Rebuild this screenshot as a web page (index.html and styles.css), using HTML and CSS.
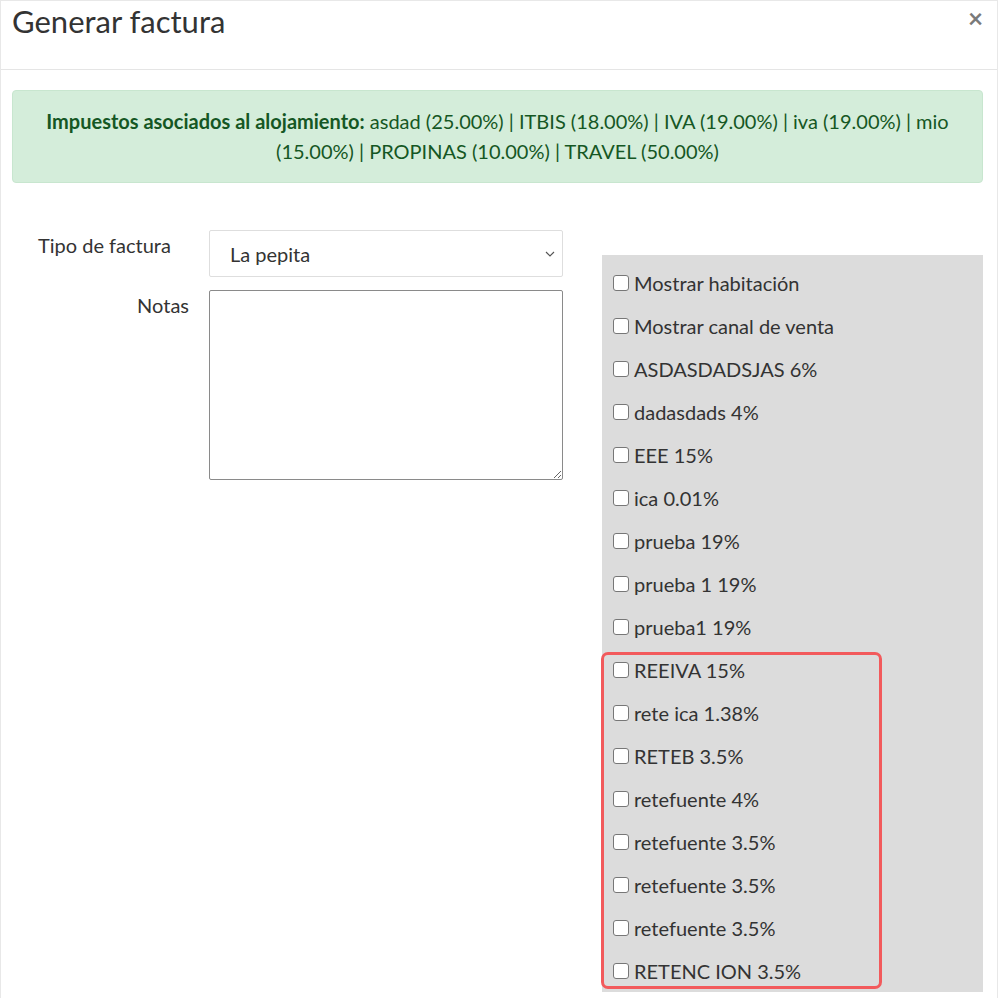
FILE: index.html
```html
<!DOCTYPE html>
<html lang="es">
<head>
<meta charset="utf-8">
<title>Generar factura</title>
<link rel="stylesheet" href="styles.css">
</head>
<body>
<div class="modal">
	<header class="modal-header">
		<h1>Generar factura</h1>
		<span class="close">&times;</span>
	</header>
	<div class="modal-body">
		<p class="alert"><b>Impuestos asociados al alojamiento:</b> asdad (25.00%) | ITBIS (18.00%) | IVA (19.00%) | iva (19.00%) | mio (15.00%) | PROPINAS (10.00%) | TRAVEL (50.00%)</p>
		<div class="content">
			<form class="fields">
				<label class="lbl lbl-left" for="tipo">Tipo de factura</label>
				<div class="select-wrap">
					<select id="tipo" class="ctl">
						<option>La pepita</option>
					</select>
					<svg class="chevron" width="10" height="6" viewBox="0 0 10 6"><path d="M1 1l4 4 4-4" fill="none" stroke="#555" stroke-width="1.1"/></svg>
				</div>
				<label class="lbl" for="notas">Notas</label>
				<textarea id="notas" class="ctl notes"></textarea>
			</form>
			<div class="options">
				<label class="opt"><input type="checkbox"> Mostrar habitación</label>
				<label class="opt"><input type="checkbox"> Mostrar canal de venta</label>
				<label class="opt"><input type="checkbox"> ASDASDADSJAS 6%</label>
				<label class="opt"><input type="checkbox"> dadasdads 4%</label>
				<label class="opt"><input type="checkbox"> EEE 15%</label>
				<label class="opt"><input type="checkbox"> ica 0.01%</label>
				<label class="opt"><input type="checkbox"> prueba 19%</label>
				<label class="opt"><input type="checkbox"> prueba 1 19%</label>
				<label class="opt"><input type="checkbox"> prueba1 19%</label>
				<label class="opt"><input type="checkbox"> REEIVA 15%</label>
				<label class="opt"><input type="checkbox"> rete ica 1.38%</label>
				<label class="opt"><input type="checkbox"> RETEB 3.5%</label>
				<label class="opt"><input type="checkbox"> retefuente 4%</label>
				<label class="opt"><input type="checkbox"> retefuente 3.5%</label>
				<label class="opt"><input type="checkbox"> retefuente 3.5%</label>
				<label class="opt"><input type="checkbox"> retefuente 3.5%</label>
				<label class="opt"><input type="checkbox"> RETENC ION 3.5%</label>
				<div class="highlight"></div>
			</div>
		</div>
	</div>
</div>
</body>
</html>
```

FILE: styles.css
```css
html, body {
  margin: 0;
  padding: 0;
  background: white;
}

body {
  font-family: Lato, "Open Sans", sans-serif;
  color: #333;
}

.modal {
  width: 998px;
  height: 998px;
  box-sizing: border-box;
  border: 1px solid #e8e8e8;
  border-bottom: 0;
  overflow: hidden;
}

/* || header */

.modal-header {
  height: 68px;
  border-bottom: 1px solid #e5e5e5;
  display: flex;
  justify-content: space-between;
  align-items: flex-start;
  padding: 0 14px 0 11px;
}

.modal-header h1 {
  margin: 0;
  font-size: 31px;
  font-weight: 400;
  line-height: 40px;
  color: #333;
}

.close {
  font-size: 26px;
  font-weight: 700;
  line-height: 34px;
  color: #7a7a7a;
}

/* || body */

.modal-body {
  padding: 20px 14px 0 11px;
}

.alert {
  margin: 0;
  background-color: #d4edda;
  border: 1px solid #c8e6cf;
  border-radius: 4px;
  color: #155724;
  font-size: 20px;
  line-height: 30px;
  text-align: center;
  padding: 15px 20px 16px;
}

.content {
  display: flex;
  align-items: flex-start;
  padding: 47px 0 0 26px;
  gap: 39px;
}

.fields {
  display: grid;
  grid-template-columns: 151px 354px;
  column-gap: 20px;
  row-gap: 13px;
  margin: 0;
}

.lbl {
  font-size: 20px;
  line-height: 24px;
  padding-top: 3px;
  text-align: right;
}

.lbl-left {
  text-align: left;
  padding-left: 0;
}

.ctl {
  font-family: Lato, "Open Sans", sans-serif;
  font-size: 20px;
  color: #333;
  box-sizing: border-box;
  margin: 0;
}

.select-wrap {
  position: relative;
}

select.ctl {
  appearance: none;
  width: 100%;
  height: 47px;
  border: 1px solid #dedede;
  border-radius: 2px;
  background: white;
  padding: 0 30px 0 20px;
}

.chevron {
  position: absolute;
  right: 8px;
  top: 21px;
  pointer-events: none;
}

.notes {
  height: 190px;
  border: 1px solid #8a8a8a;
  border-radius: 2px;
}

/* || options panel */

.options {
  position: relative;
  margin-top: 25px;
  width: 382px;
  background-color: #dcdcdc;
  padding: 6px 12px 0 11px;
  box-sizing: border-box;
}

.opt {
  display: flex;
  align-items: center;
  gap: 5px;
  height: 43px;
  font-size: 20px;
  color: #333;
}

.opt input {
  appearance: none;
  margin: 0;
  width: 16px;
  height: 16px;
  border: 1px solid #777;
  border-radius: 3px;
  background: white;
}

.highlight {
  position: absolute;
  left: -1px;
  top: 397px;
  width: 281px;
  height: 337px;
  box-sizing: border-box;
  border: 3px solid #f25a5c;
  border-radius: 7px;
}
```
